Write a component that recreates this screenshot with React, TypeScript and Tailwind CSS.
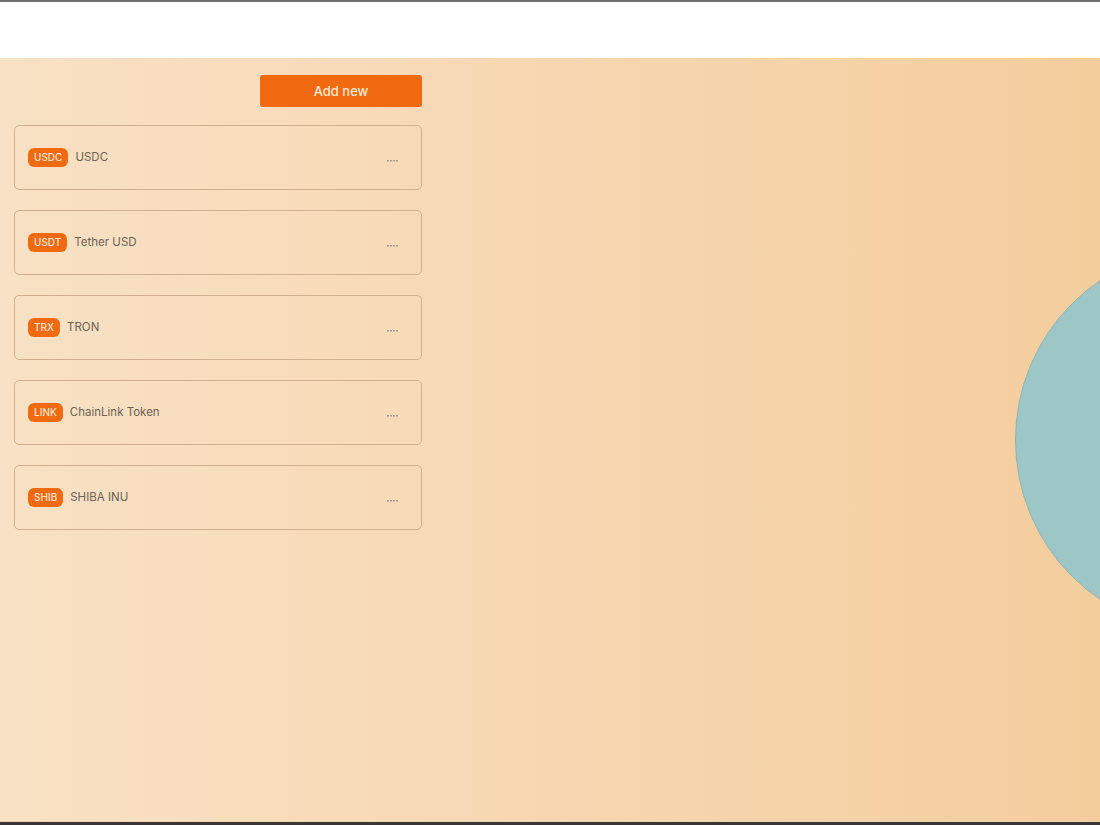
const tokens = [
  { symbol: 'USDC', name: 'USDC' },
  { symbol: 'USDT', name: 'Tether USD' },
  { symbol: 'TRX', name: 'TRON' },
  { symbol: 'LINK', name: 'ChainLink Token' },
  { symbol: 'SHIB', name: 'SHIBA INU' },
];

function Dots() {
  return (
    <svg width="11" height="2" viewBox="0 0 11 2" className="mt-[6px]" fill="#a8978a">
      <rect x="0" y="0" width="2" height="1.5" />
      <rect x="3" y="0" width="2" height="1.5" />
      <rect x="6" y="0" width="2" height="1.5" />
      <rect x="9" y="0" width="2" height="1.5" />
    </svg>
  );
}

function TokenCard({ symbol, name }: { symbol: string; name: string }) {
  return (
    <div className="flex h-[65px] items-center justify-between rounded-[5px] border border-[#d0b090] pl-[13px] pr-[23px]">
      <div className="flex items-center gap-[7px]">
        <span className="rounded-[6px] bg-[#f26a10] px-[6px] py-[3px] text-[10px] font-medium leading-[13px] text-[#fde3cc]">
          {symbol}
        </span>
        <span className="text-[11.5px] text-[#6e5f52]">{name}</span>
      </div>
      <Dots />
    </div>
  );
}

export default function App() {
  return (
    <div className="flex h-[825px] w-[1100px] flex-col overflow-hidden font-['Inter',sans-serif]">
      <div className="h-[2px] bg-[#6f6f6f]" />
      <div className="h-[56px] bg-white" />
      <div className="relative flex-1 overflow-hidden bg-gradient-to-r from-[#f9e1c5] to-[#f4cd9d]">
        <div className="absolute left-[1015px] top-[189px] h-[386px] w-[386px] rounded-full border border-[#93b4b0] bg-[#9dc6c6]" />
        <div className="relative flex w-[422px] flex-col gap-[20px] pl-[14px] pt-[17px]">
          <div className="flex justify-end">
            <button className="h-[32px] w-[162px] rounded-[3px] bg-[#f26a10] pt-[1px] text-[13px] font-medium text-[#fde8d4]">
              Add new
            </button>
          </div>
          <div className="-mt-[2px] flex flex-col gap-[20px]">
            {tokens.map((t) => (
              <TokenCard key={t.symbol} symbol={t.symbol} name={t.name} />
            ))}
          </div>
        </div>
      </div>
      <div className="h-[1px] bg-[#e9d4b4]" />
      <div className="h-[3px] bg-[#3b3633]" />
    </div>
  );
}
